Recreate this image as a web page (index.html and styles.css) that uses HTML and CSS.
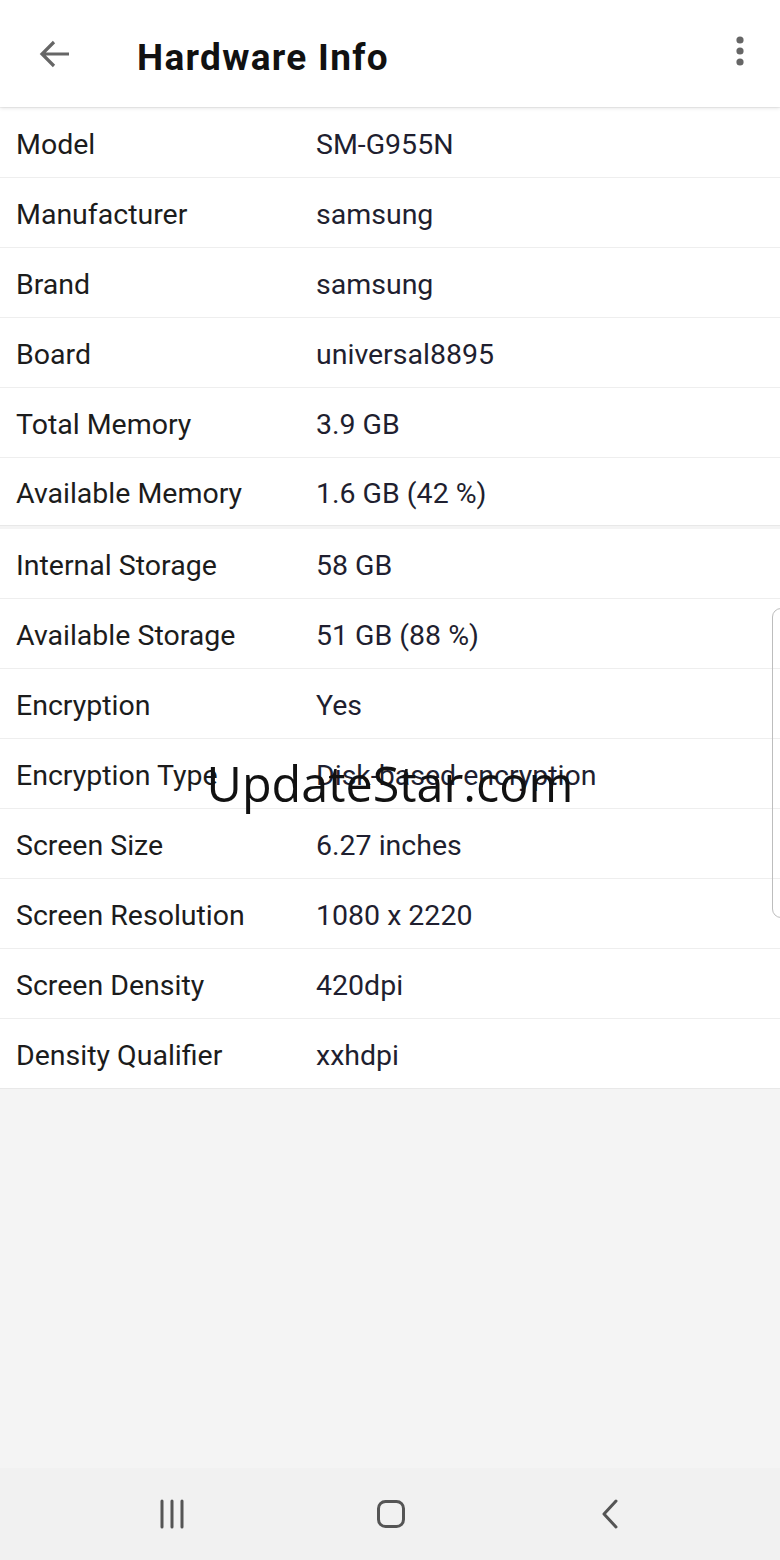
FILE: index.html
```html
<!DOCTYPE html>
<html>
<head>
<meta charset="utf-8">
<link rel="stylesheet" href="styles.css">
</head>
<body>
<div class="screen">
  <header class="appbar">
    <svg class="back" width="34" height="30" viewBox="0 0 34 30"><path d="M31 15H4M16 3L4 15l12 12" fill="none" stroke="#666" stroke-width="3.2" stroke-linecap="butt"/></svg>
    <h1 class="title">Hardware Info</h1>
    <svg class="more" width="10" height="34" viewBox="0 0 10 34"><circle cx="5" cy="4" r="3.6" fill="#666"/><circle cx="5" cy="15" r="3.6" fill="#666"/><circle cx="5" cy="26" r="3.6" fill="#666"/></svg>
  </header>
  <main class="content">
    <section class="card">
      <div class="row"><span class="label">Model</span><span class="value">SM-G955N</span></div>
      <div class="row"><span class="label">Manufacturer</span><span class="value">samsung</span></div>
      <div class="row"><span class="label">Brand</span><span class="value">samsung</span></div>
      <div class="row"><span class="label">Board</span><span class="value">universal8895</span></div>
      <div class="row"><span class="label">Total Memory</span><span class="value">3.9 GB</span></div>
      <div class="row last"><span class="label">Available Memory</span><span class="value">1.6 GB (42 %)</span></div>
    </section>
    <section class="card">
      <div class="row"><span class="label">Internal Storage</span><span class="value">58 GB</span></div>
      <div class="row"><span class="label">Available Storage</span><span class="value">51 GB (88 %)</span></div>
      <div class="row"><span class="label">Encryption</span><span class="value">Yes</span></div>
      <div class="row"><span class="label">Encryption Type</span><span class="value">Disk-based encryption</span></div>
      <div class="row"><span class="label">Screen Size</span><span class="value">6.27 inches</span></div>
      <div class="row"><span class="label">Screen Resolution</span><span class="value">1080 x 2220</span></div>
      <div class="row"><span class="label">Screen Density</span><span class="value">420dpi</span></div>
      <div class="row last"><span class="label">Density Qualifier</span><span class="value">xxhdpi</span></div>
    </section>
    <div class="scroller"></div>
    <div class="watermark">UpdateStar.com</div>
  </main>
  <nav class="navbar">
    <svg width="30" height="30" viewBox="0 0 30 30"><path d="M4 2v26M14 2v26M24 2v26" stroke="#555" stroke-width="3" stroke-linecap="round"/></svg>
    <svg width="30" height="30" viewBox="0 0 30 30"><rect x="2.5" y="2.5" width="25" height="25" rx="7" fill="none" stroke="#555" stroke-width="3"/></svg>
    <svg width="20" height="30" viewBox="0 0 20 30"><path d="M16 2L4 15l12 13" fill="none" stroke="#555" stroke-width="3" stroke-linecap="round" stroke-linejoin="round"/></svg>
  </nav>
</div>
</body>
</html>
```
FILE: styles.css
```css
* { box-sizing: border-box; }
html, body { margin: 0; padding: 0; }
body { font-family: Roboto, "Noto Sans", sans-serif; background: #f4f4f4; }
.screen { width: 780px; height: 1560px; display: flex; flex-direction: column; background: #f4f4f4; position: relative; overflow: hidden; }
.appbar { height: 107px; background: #fff; display: flex; align-items: center; padding: 0 38px; box-shadow: 0 1px 4px rgba(0,0,0,0.12); position: relative; z-index: 2; flex: none; }
.back { margin-top: 0; margin-right: 65px; }
.title { font-size: 37px; font-weight: 700; color: #111; margin: 8px 0 0 0; flex: 1; letter-spacing: 1.3px; }
.more { margin-right: -3px; margin-top: -2px; }
.content { flex: 1; position: relative; display: flex; flex-direction: column; gap: 3px; padding-top: 1px; }
.card { background: #fff; }
.row { height: 70px; display: flex; align-items: center; border-bottom: 1.5px solid #eeeeee; padding-left: 16px; padding-top: 3px; font-size: 28.5px; }
.row.last { border-bottom: 1px solid #e8e8e8; }
.card:first-child .row.last { height: 68px; }
.label { width: 300px; color: #1c1c1c; }
.value { color: #1f1f30; }
.scroller { position: absolute; left: 772px; top: 501px; width: 30px; height: 310px; border: 1.5px solid #bdbdbd; border-radius: 9px; }
.watermark { position: absolute; left: 0; right: 0; top: 641px; text-align: center; font-family: "Open Sans", sans-serif; font-size: 48.5px; color: #111; line-height: 70px; }
.navbar { height: 92px; background: #f1f1f1; display: flex; align-items: center; justify-content: space-between; padding: 0 160px 0 158px; flex: none; }
.navbar svg:nth-child(2) { margin-left: -6px; }
```
